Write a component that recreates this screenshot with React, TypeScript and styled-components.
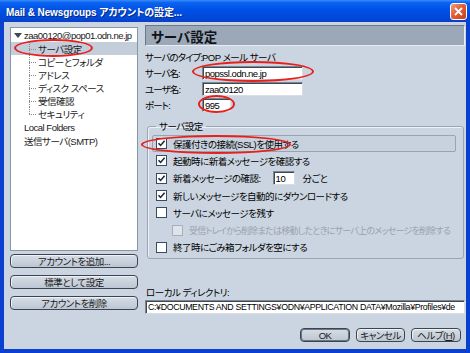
import React from "react";
import styled, { createGlobalStyle } from "styled-components";

const GlobalStyle = createGlobalStyle`
  html, body {
    margin: 0;
    padding: 0;
    background: #ffffff;
  }
  * {
    box-sizing: border-box;
  }
`;

const FONT = `"Liberation Sans", "Noto Sans CJK JP", sans-serif`;

const Window = styled.div`
  position: relative;
  width: 470px;
  height: 353px;
  display: flex;
  flex-direction: column;
  background: #0a3fd0;
  font-family: ${FONT};
  font-size: 9.5px;
  letter-spacing: -0.5px;
  font-feature-settings: "palt";
  color: #000;
  overflow: hidden;
`;

const TitleBar = styled.div`
  height: 22px;
  flex: none;
  display: flex;
  align-items: center;
  justify-content: space-between;
  padding: 0 3px 0 6px;
  background: linear-gradient(
    180deg,
    #3a8cff 0%,
    #0a64f0 12%,
    #0050e6 45%,
    #0049da 80%,
    #0a3fc4 100%
  );
`;

const TitleText = styled.div`
  color: #fff;
  font-weight: bold;
  font-size: 10px;
  letter-spacing: -0.1px;
  text-shadow: 1px 1px 0 #0a2a80;
`;

const CloseButton = styled.div`
  width: 17px;
  height: 17px;
  border: 1px solid #fff;
  border-radius: 3px;
  background: linear-gradient(135deg, #f0a080 0%, #e0603a 45%, #c8401c 100%);
  display: flex;
  align-items: center;
  justify-content: center;
`;

const Body = styled.div`
  flex: 1;
  margin: 0 4px 4px 4px;
  background: #cbd5e1;
  display: flex;
  gap: 7px;
  padding: 5px 1px 0 6px;
  min-height: 0;
`;

const LeftColumn = styled.div`
  width: 128px;
  flex: none;
  display: flex;
  flex-direction: column;
`;

const Tree = styled.div`
  height: 224px;
  background: #fff;
  border: 1px solid #8a96a6;
  padding-top: 1px;
  display: flex;
  flex-direction: column;
  overflow: hidden;
`;

const TreeRow = styled.div<{ $indent: number; $height?: number; $selected?: boolean }>`
  height: ${(p) => p.$height ?? 13}px;
  flex: none;
  display: flex;
  align-items: center;
  padding-left: ${(p) => p.$indent}px;
  background: ${(p) => (p.$selected ? "#c4ceda" : "transparent")};
  white-space: nowrap;
  color: #1a1a1a;
`;

const TreeBranch = styled.span<{ $last?: boolean }>`
  width: 8px;
  height: 100%;
  flex: none;
  margin-right: 1px;
  position: relative;
  &::before {
    content: "";
    position: absolute;
    left: 0;
    top: 0;
    height: ${(p) => (p.$last ? "50%" : "100%")};
    border-left: 1px dotted #8a8a8a;
  }
  &::after {
    content: "";
    position: absolute;
    left: 0;
    top: 50%;
    width: 7px;
    border-top: 1px dotted #8a8a8a;
  }
`;

const Twisty = styled.span`
  width: 0;
  height: 0;
  border-left: 4px solid transparent;
  border-right: 4px solid transparent;
  border-top: 5px solid #404850;
  margin-right: 2px;
  flex: none;
`;

const SideButtons = styled.div`
  display: flex;
  flex-direction: column;
  gap: 7px;
  margin-top: 3px;
`;

const PillButton = styled.div<{ $width?: number; $default?: boolean }>`
  height: 14px;
  flex: none;
  width: ${(p) => (p.$width ? `${p.$width}px` : "100%")};
  border: 1px solid #3c4450;
  border-radius: 4px;
  background: linear-gradient(180deg, #d6dde6 0%, #bcc6d2 100%);
  box-shadow: ${(p) =>
    p.$default ? "inset 0 0 0 1px #6a7686" : "inset 1px 1px 0 #eef2f6"};
  display: flex;
  align-items: center;
  justify-content: center;
  color: #1a1a1a;
  white-space: nowrap;
`;

const RightColumn = styled.div`
  flex: 1;
  min-width: 0;
  display: flex;
  flex-direction: column;
`;

const PanelHeader = styled.div`
  height: 21px;
  flex: none;
  background: #9ca8b8;
  border: 1px solid #6c7888;
  border-right-color: #e8edf2;
  border-bottom-color: #e8edf2;
  display: flex;
  align-items: center;
  padding-left: 5px;
  font-size: 13.5px;
  letter-spacing: 0;
  font-weight: bold;
  color: #101418;
  margin-top: -2px;
`;

const FieldRow = styled.div<{ $height: number }>`
  height: ${(p) => p.$height}px;
  flex: none;
  display: flex;
  align-items: center;
  white-space: nowrap;
`;

const FieldLabel = styled.span`
  width: 57px;
  flex: none;
  white-space: nowrap;
  letter-spacing: -0.9px;
`;

const TextBox = styled.div<{ $width?: number }>`
  height: 14px;
  flex: none;
  width: ${(p) => (p.$width ? `${p.$width}px` : "100%")};
  background: #fff;
  border: 1px solid #7a8696;
  border-right-color: #d8dee6;
  border-bottom-color: #d8dee6;
  box-shadow: inset 1px 1px 0 #404850;
  display: flex;
  align-items: center;
  padding-left: 2px;
  white-space: nowrap;
  overflow: hidden;
`;

const GroupBox = styled.fieldset`
  margin: 6px 1px 0 2px;
  padding: 0 7px 0 4px;
  height: 140px;
  flex: none;
  min-width: 0;
  border: 1px solid #9aa6b4;
  border-radius: 3px;
  box-shadow: inset 1px 1px 0 #eef2f6;
  display: flex;
  flex-direction: column;
`;

const GroupLegend = styled.legend`
  padding: 0 3px;
  margin-left: 4px;
`;

const CheckRow = styled.div<{
  $indent?: number;
  $focused?: boolean;
  $disabled?: boolean;
}>`
  height: 17.3px;
  flex: none;
  display: flex;
  align-items: center;
  padding-left: ${(p) => (p.$indent ?? 0) + 3}px;
  color: ${(p) => (p.$disabled ? "#9aa2ac" : "#000")};
  font-size: ${(p) => (p.$disabled ? "9px" : "inherit")};
  letter-spacing: ${(p) => (p.$disabled ? "-0.75px" : "inherit")};
  border: 1px solid ${(p) => (p.$focused ? "#9aa4b0" : "transparent")};
  border-radius: 2px;
  background: ${(p) => (p.$focused ? "#c8d2de" : "transparent")};
  white-space: nowrap;
  overflow: hidden;
`;

const CheckBox = styled.span<{ $disabled?: boolean }>`
  width: 11px;
  height: 11px;
  flex: none;
  margin-right: 6px;
  border: 1px solid ${(p) => (p.$disabled ? "#a8b0ba" : "#3a4a60")};
  background: ${(p) => (p.$disabled ? "#dfe4ea" : "#fff")};
  display: flex;
  align-items: center;
  justify-content: center;
`;

const Inline = styled.span<{ $gap?: number }>`
  margin-left: ${(p) => p.$gap ?? 0}px;
  display: flex;
  align-items: center;
`;

const DirLabel = styled.div`
  margin-top: 26px;
  height: 14px;
  flex: none;
  display: flex;
  align-items: center;
  padding-left: 1px;
`;

const DirBox = styled(TextBox)`
  margin-top: 1px;
  font-size: 8.8px;
  letter-spacing: -0.35px;
`;

const DialogButtons = styled.div`
  display: flex;
  justify-content: flex-end;
  gap: 6px;
  margin-top: 14px;
  padding-right: 4px;
`;

const Highlight = styled.div`
  position: absolute;
  border: 2px solid #e8201c;
  border-radius: 50%;
  pointer-events: none;
`;

const Check = () => (
  <svg width="9" height="9" viewBox="0 0 9 9">
    <path
      d="M1.5 4.2 L3.6 6.4 L7.6 1.8"
      fill="none"
      stroke="#1e2a38"
      strokeWidth="1.6"
    />
  </svg>
);

const Box = ({ checked, disabled }: { checked?: boolean; disabled?: boolean }) => (
  <CheckBox $disabled={disabled}>{checked ? <Check /> : null}</CheckBox>
);

const treeChildren = [
  "サーバ設定",
  "コピーとフォルダ",
  "アドレス",
  "ディスク スペース",
  "受信確認",
  "セキュリティ",
];

// red marker ellipses drawn over the dialog
const overlays = [
  { left: 14, top: 39, width: 79, height: 18 },
  { left: 192, top: 61, width: 122, height: 21 },
  { left: 198, top: 95, width: 37, height: 18 },
  { left: 141, top: 135, width: 150, height: 19 },
];

export default function App() {
  return (
    <>
      <GlobalStyle />
      <Window>
        <TitleBar>
          <TitleText>Mail &amp; Newsgroups アカウントの設定...</TitleText>
          <CloseButton>
            <svg width="9" height="9" viewBox="0 0 9 9">
              <path d="M1 1 L8 8 M8 1 L1 8" stroke="#fff" strokeWidth="1.8" />
            </svg>
          </CloseButton>
        </TitleBar>
        <Body>
          <LeftColumn>
            <Tree>
              <TreeRow $indent={3}>
                <Twisty />
                zaa00120@pop01.odn.ne.jp
              </TreeRow>
              {treeChildren.map((label, i) => (
                <TreeRow key={label} $indent={18} $selected={i === 0}>
                  <TreeBranch $last={i === treeChildren.length - 1} />
                  {label}
                </TreeRow>
              ))}
              <TreeRow $indent={13} $height={14}>
                Local Folders
              </TreeRow>
              <TreeRow $indent={13} $height={14}>
                送信サーバ(SMTP)
              </TreeRow>
            </Tree>
            <SideButtons>
              <PillButton>アカウントを追加...</PillButton>
              <PillButton>標準として設定</PillButton>
              <PillButton>アカウントを削除</PillButton>
            </SideButtons>
          </LeftColumn>
          <RightColumn>
            <PanelHeader>サーバ設定</PanelHeader>
            <FieldRow $height={17} style={{ marginTop: 2 }}>
              <FieldLabel>サーバのタイプ:</FieldLabel>
              POP メール サーバ
            </FieldRow>
            <FieldRow $height={16}>
              <FieldLabel>サーバ名:</FieldLabel>
              <TextBox $width={101}>popssl.odn.ne.jp</TextBox>
            </FieldRow>
            <FieldRow $height={16}>
              <FieldLabel>ユーザ名:</FieldLabel>
              <TextBox $width={101}>zaa00120</TextBox>
            </FieldRow>
            <FieldRow $height={16}>
              <FieldLabel>ポート:</FieldLabel>
              <TextBox $width={29}>995</TextBox>
            </FieldRow>
            <GroupBox>
              <GroupLegend>サーバ設定</GroupLegend>
              <CheckRow $focused style={{ marginTop: 2 }}>
                <Box checked />
                保護付きの接続(SSL)を使用する
              </CheckRow>
              <CheckRow>
                <Box checked />
                起動時に新着メッセージを確認する
              </CheckRow>
              <CheckRow>
                <Box checked />
                新着メッセージの確認:
                <Inline $gap={12}>
                  <TextBox $width={22}>10</TextBox>
                </Inline>
                <Inline $gap={8}>分ごと</Inline>
              </CheckRow>
              <CheckRow>
                <Box checked />
                新しいメッセージを自動的にダウンロードする
              </CheckRow>
              <CheckRow>
                <Box />
                サーバにメッセージを残す
              </CheckRow>
              <CheckRow $indent={16} $disabled>
                <Box disabled />
                受信トレイから削除または移動したときにサーバ上のメッセージを削除する
              </CheckRow>
              <CheckRow>
                <Box />
                終了時にごみ箱フォルダを空にする
              </CheckRow>
            </GroupBox>
            <DirLabel>ローカル ディレクトリ:</DirLabel>
            <DirBox>
              C:¥DOCUMENTS AND SETTINGS¥ODN¥APPLICATION DATA¥Mozilla¥Profiles¥de
            </DirBox>
            <DialogButtons>
              <PillButton $width={50} $default>
                OK
              </PillButton>
              <PillButton $width={49}>キャンセル</PillButton>
              <PillButton $width={50}>
                ヘルプ(<u>H</u>)
              </PillButton>
            </DialogButtons>
          </RightColumn>
        </Body>
        {overlays.map((o, i) => (
          <Highlight key={i} style={o} />
        ))}
      </Window>
    </>
  );
}
